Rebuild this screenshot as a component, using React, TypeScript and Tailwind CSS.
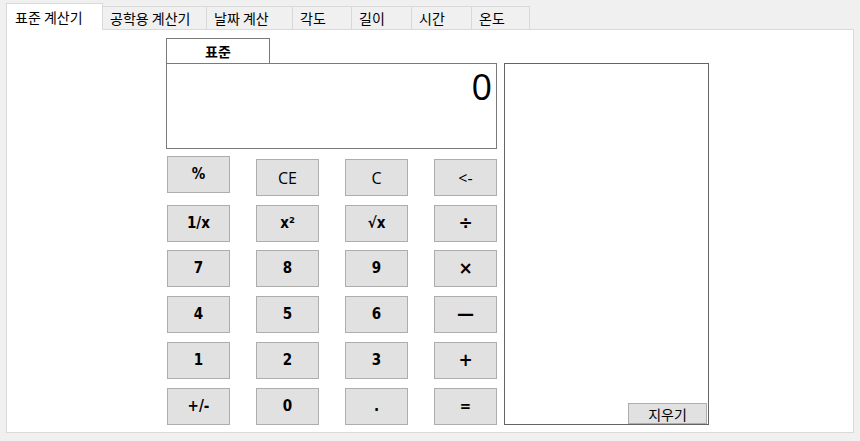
import React from 'react';

const tabs = [
    { label: '표준 계산기', w: 'w-[97px]', active: true },
    { label: '공학용 계산기', w: 'w-[104px]', active: false },
    { label: '날짜 계산', w: 'w-[86px]', active: false },
    { label: '각도', w: 'w-[59px]', active: false },
    { label: '길이', w: 'w-[60px]', active: false },
    { label: '시간', w: 'w-[60px]', active: false },
    { label: '온도', w: 'w-[58px]', active: false },
];

type Key = { label: string; kind: 'bold' | 'plain' | 'op'; shift?: boolean };

const rows: Key[][] = [
    [
        { label: '%', kind: 'bold' },
        { label: 'CE', kind: 'plain', shift: true },
        { label: 'C', kind: 'plain', shift: true },
        { label: '<-', kind: 'plain', shift: true },
    ],
    [
        { label: '1/x', kind: 'bold' },
        { label: 'x²', kind: 'bold' },
        { label: '√x', kind: 'bold' },
        { label: '÷', kind: 'op' },
    ],
    [
        { label: '7', kind: 'bold' },
        { label: '8', kind: 'bold' },
        { label: '9', kind: 'bold' },
        { label: '×', kind: 'op' },
    ],
    [
        { label: '4', kind: 'bold' },
        { label: '5', kind: 'bold' },
        { label: '6', kind: 'bold' },
        { label: '—', kind: 'op' },
    ],
    [
        { label: '1', kind: 'bold' },
        { label: '2', kind: 'bold' },
        { label: '3', kind: 'bold' },
        { label: '+', kind: 'op' },
    ],
    [
        { label: '+/-', kind: 'bold' },
        { label: '0', kind: 'bold' },
        { label: '.', kind: 'bold' },
        { label: '=', kind: 'bold' },
    ],
];

const keyText = {
    bold: "font-['DejaVu_Sans_Condensed',sans-serif] font-bold text-[15px]",
    plain: "font-['Open_Sans',sans-serif] text-[16px]",
    op: "font-['DejaVu_Sans',sans-serif] font-bold text-[17px]",
};

// spacing under each row, matching the uneven gaps of the original form
const rowGap = ['mb-[9px]', 'mb-[8px]', 'mb-[9px]', 'mb-[9px]', 'mb-[9px]', ''];

export default function App() {
    return (
        <div className="w-[860px] h-[441px] bg-[#f0f0f0] flex flex-col font-['Noto_Sans_CJK_KR',sans-serif] text-black">
            <div className="flex items-end pl-[6px] pt-[3px] h-[29px]">
                {tabs.map((t) =>
                    t.active ? (
                        <div
                            key={t.label}
                            className={`${t.w} h-[27px] bg-white border border-b-0 border-[#d9d9d9] flex items-center pl-[8px] text-[14px] relative z-10 -mb-[1px]`}
                        >
                            {t.label}
                        </div>
                    ) : (
                        <div
                            key={t.label}
                            className={`${t.w} h-[23px] bg-[#f0f0f0] border border-l-0 border-b-0 border-[#d9d9d9] flex items-center pl-[7px] text-[14px]`}
                        >
                            {t.label}
                        </div>
                    )
                )}
            </div>
            <div className="mx-[6px] w-[848px] h-[404px] bg-white border border-[#d9d9d9] flex items-start pl-[159px] pt-[8px]">
                <div className="w-[331px] flex flex-col">
                    <div className="w-[104px] h-[25px] border border-b-0 border-[#7a7a7a] flex items-center justify-center text-[14px] font-bold">
                        표준
                    </div>
                    <div className="h-[86px] border border-[#7a7a7a] flex justify-end pr-[4px] pt-[3px]">
                        <span className="font-['Open_Sans',sans-serif] text-[36px] leading-[40px]">0</span>
                    </div>
                    <div className="flex flex-col mt-[7px] pl-[1px]">
                        {rows.map((row, i) => (
                            <div key={i} className={`flex items-start gap-[26px] ${rowGap[i]}`}>
                                {row.map((k) => (
                                    <div
                                        key={k.label}
                                        className={`w-[63px] h-[37px] bg-[#e1e1e1] border border-[#adadad] flex items-center justify-center ${keyText[k.kind]} ${k.shift ? 'mt-[3px]' : ''}`}
                                    >
                                        {k.label}
                                    </div>
                                ))}
                            </div>
                        ))}
                    </div>
                </div>
                <div className="ml-[7px] mt-[25px] w-[205px] h-[362px] border border-[#646464] flex items-end justify-end pr-[1px]">
                    <div className="w-[79px] h-[21px] bg-[#e1e1e1] border border-[#adadad] flex items-center justify-center text-[14px] leading-none">
                        지우기
                    </div>
                </div>
            </div>
        </div>
    );
}
